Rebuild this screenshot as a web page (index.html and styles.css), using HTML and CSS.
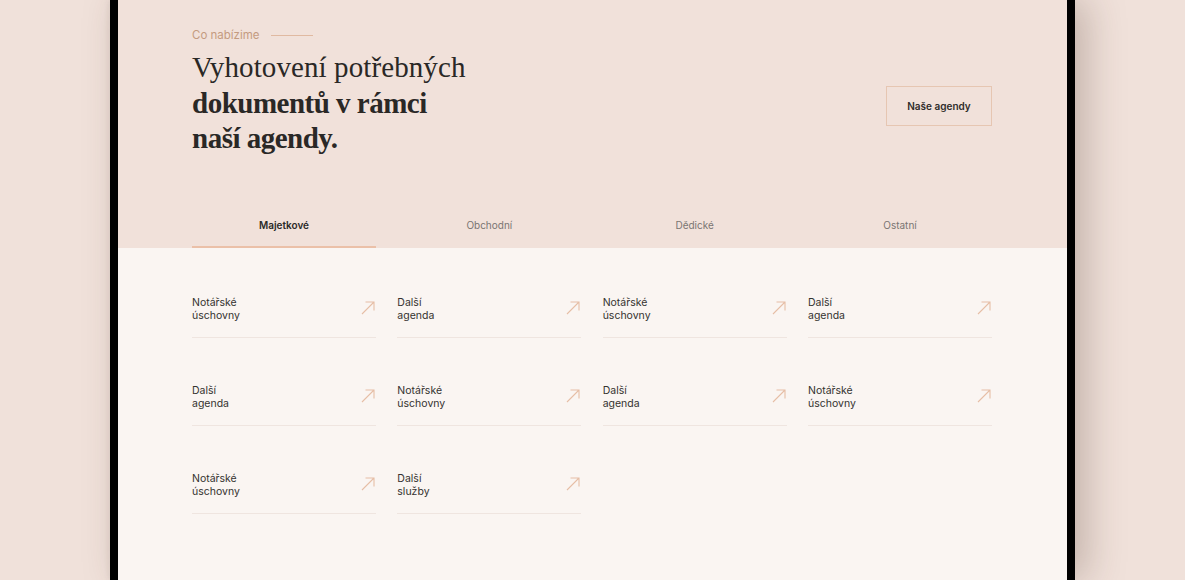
FILE: index.html
```html
<!DOCTYPE html>
<html lang="cs">
<head>
<meta charset="utf-8">
<title>Co nabízime</title>
<link rel="stylesheet" href="styles.css">
</head>
<body>
<div class="frame">
  <section class="hero">
    <div class="hero-row">
      <div class="hero-text">
        <div class="eyebrow"><span>Co nabízime</span><i class="eyebrow-line"></i></div>
        <h1 class="title">Vyhotovení potřebných<br><strong>dokumentů v rámci<br>naší agendy.</strong></h1>
      </div>
      <a class="btn" href="#">Naše agendy</a>
    </div>
    <nav class="tabs">
      <a class="tab active" href="#">Majetkové</a>
      <a class="tab" href="#">Obchodní</a>
      <a class="tab" href="#">Dědické</a>
      <a class="tab" href="#">Ostatní</a>
    </nav>
  </section>
  <section class="list">
    <div class="grid">
      <a class="item" href="#"><span>Notářské<br>úschovny</span><svg class="arrow" viewBox="0 0 14 14"><path d="M1 13L13 1M4.5 1H13V9.5"/></svg></a>
      <a class="item" href="#"><span>Další<br>agenda</span><svg class="arrow" viewBox="0 0 14 14"><path d="M1 13L13 1M4.5 1H13V9.5"/></svg></a>
      <a class="item" href="#"><span>Notářské<br>úschovny</span><svg class="arrow" viewBox="0 0 14 14"><path d="M1 13L13 1M4.5 1H13V9.5"/></svg></a>
      <a class="item" href="#"><span>Další<br>agenda</span><svg class="arrow" viewBox="0 0 14 14"><path d="M1 13L13 1M4.5 1H13V9.5"/></svg></a>
      <a class="item" href="#"><span>Další<br>agenda</span><svg class="arrow" viewBox="0 0 14 14"><path d="M1 13L13 1M4.5 1H13V9.5"/></svg></a>
      <a class="item" href="#"><span>Notářské<br>úschovny</span><svg class="arrow" viewBox="0 0 14 14"><path d="M1 13L13 1M4.5 1H13V9.5"/></svg></a>
      <a class="item" href="#"><span>Další<br>agenda</span><svg class="arrow" viewBox="0 0 14 14"><path d="M1 13L13 1M4.5 1H13V9.5"/></svg></a>
      <a class="item" href="#"><span>Notářské<br>úschovny</span><svg class="arrow" viewBox="0 0 14 14"><path d="M1 13L13 1M4.5 1H13V9.5"/></svg></a>
      <a class="item" href="#"><span>Notářské<br>úschovny</span><svg class="arrow" viewBox="0 0 14 14"><path d="M1 13L13 1M4.5 1H13V9.5"/></svg></a>
      <a class="item" href="#"><span>Další<br>služby</span><svg class="arrow" viewBox="0 0 14 14"><path d="M1 13L13 1M4.5 1H13V9.5"/></svg></a>
    </div>
  </section>
</div>
</body>
</html>
```
FILE: styles.css
```css
html, body {
  margin: 0;
  padding: 0;
  height: 100%;
  overflow: hidden;
}
body {
  background: #f0e1da;
  font-family: Inter, "Liberation Sans", Arial, sans-serif;
  color: #2b2a28;
}
a { text-decoration: none; color: inherit; }

.frame {
  margin-left: 110px;
  width: 949px;
  height: 580px;
  overflow: hidden;
  border-left: 8px solid #000;
  border-right: 8px solid #000;
  background: #faf5f2;
  box-shadow: 12px 0 36px rgba(70, 45, 35, 0.26), -2px 0 5px rgba(70, 45, 35, 0.06);
}

.hero {
  background: #f1e1da;
  padding: 28px 75px 0 74px;
}
.hero-row {
  display: flex;
  justify-content: space-between;
  align-items: flex-start;
}
.eyebrow {
  display: flex;
  align-items: center;
  gap: 11px;
  font-size: 11.5px;
  line-height: 14px;
  color: #c49b80;
}
.eyebrow-line {
  display: block;
  width: 42px;
  height: 1px;
  background: #e0b9a1;
}
.title {
  margin: 8px 0 0;
  font-family: "Liberation Serif", "Times New Roman", serif;
  font-weight: 400;
  font-size: 29px;
  line-height: 35.5px;
  color: #2a2826;
  letter-spacing: 0.1px;
}
.title strong {
  font-weight: 700;
  letter-spacing: -0.5px;
}

.btn {
  margin-top: 58px;
  width: 104px;
  height: 38px;
  border: 1px solid #e6c6b2;
  display: flex;
  align-items: center;
  justify-content: center;
  font-size: 10px;
  font-weight: 600;
  color: #2f2d2b;
}

.tabs {
  margin-top: 61px;
  display: grid;
  grid-template-columns: repeat(4, 1fr);
  column-gap: 21.33px;
}
.tab {
  text-align: center;
  font-size: 10px;
  line-height: 14px;
  padding-bottom: 14px;
  border-bottom: 2px solid transparent;
  color: #7a7572;
}
.tab.active {
  color: #2b2a28;
  font-weight: 600;
  border-bottom-color: #ebc0a8;
}

.list {
  padding: 48px 75px 0 74px;
}
.grid {
  display: grid;
  grid-template-columns: repeat(4, 1fr);
  column-gap: 21.33px;
  row-gap: 46px;
}
.item {
  display: flex;
  justify-content: space-between;
  align-items: flex-start;
  font-size: 10.5px;
  line-height: 13px;
  color: #34322f;
  padding-bottom: 15px;
  border-bottom: 1px solid #efe5e0;
}
.arrow {
  width: 14px;
  height: 14px;
  margin: 5px 1px 0 0;
  fill: none;
  stroke: #e6bea6;
  stroke-width: 1.1;
}
```
